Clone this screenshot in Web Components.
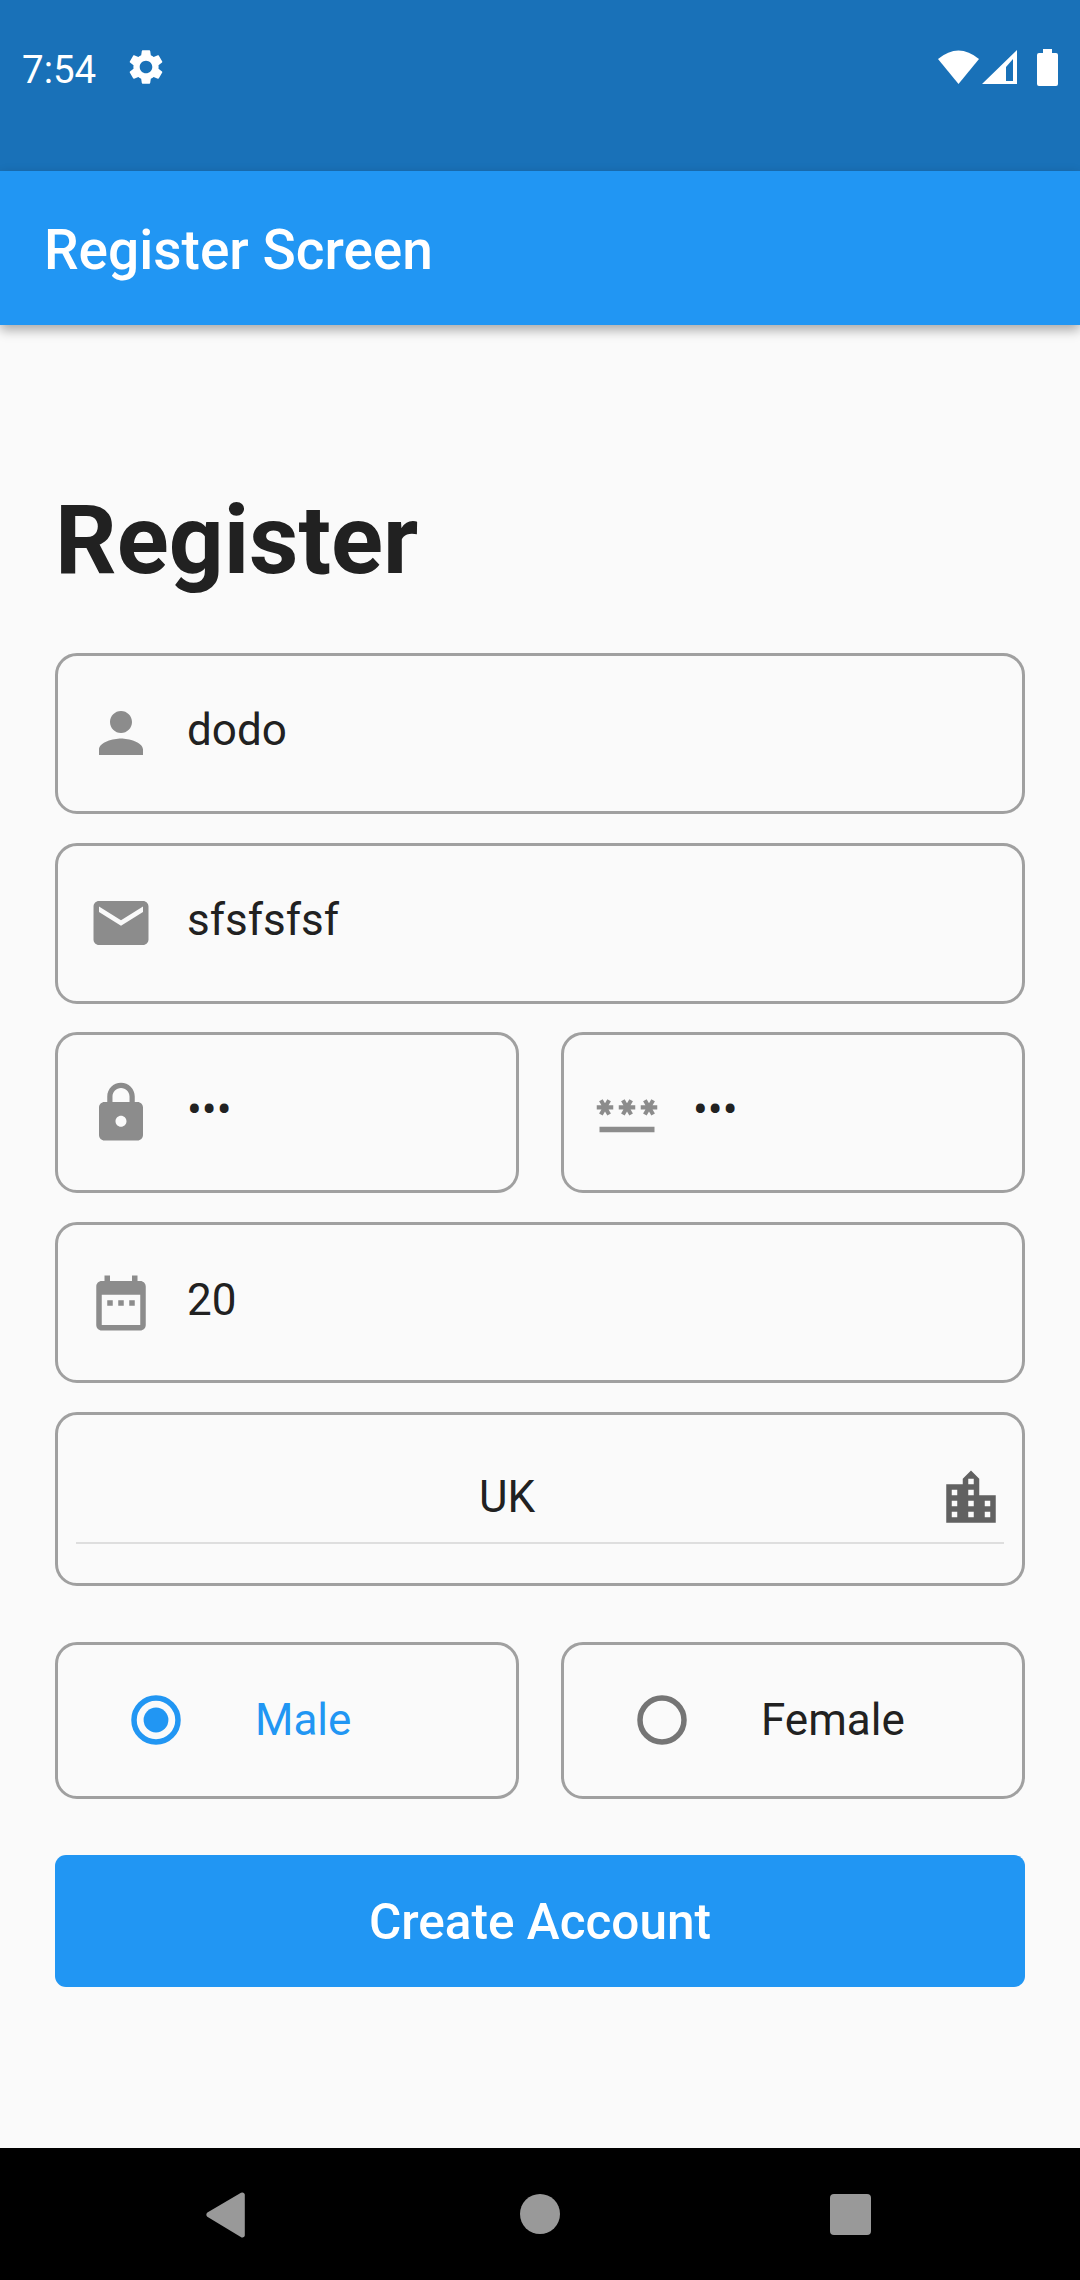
<!DOCTYPE html>
<html><head><meta charset="utf-8"><title>Register Screen</title>
<style>
html,body{margin:0;padding:0;background:#fafafa;font-family:Roboto,"Liberation Sans",sans-serif}
</style></head><body>
<register-app>
  <status-bar slot="top"></status-bar>
  <app-bar slot="top">Register Screen</app-bar>
  <page-title>Register</page-title>
  <form-field value="dodo"><svg slot="icon" width="66" height="66" viewBox="0 0 24 24" fill="#8c8c8c"><path d="M12 12c2.21 0 4-1.79 4-4s-1.79-4-4-4-4 1.79-4 4 1.79 4 4 4zm0 2c-2.67 0-8 1.34-8 4v2h16v-2c0-2.66-5.33-4-8-4z"/></svg></form-field>
  <form-field value="sfsfsfsf"><svg slot="icon" width="66" height="66" viewBox="0 0 24 24" fill="#8c8c8c"><path d="M20 4H4c-1.1 0-1.99.9-1.99 2L2 18c0 1.1.9 2 2 2h16c1.1 0 2-.9 2-2V6c0-1.1-.9-2-2-2zm0 4l-8 5-8-5V6l8 5 8-5v2z"/></svg></form-field>
  <field-pair>
    <form-field value="•••"><svg slot="icon" width="66" height="66" viewBox="0 0 24 24" fill="#8c8c8c"><path d="M18 8h-1V6c0-2.76-2.24-5-5-5S7 3.24 7 6v2H6c-1.1 0-2 .9-2 2v10c0 1.1.9 2 2 2h12c1.1 0 2-.9 2-2V10c0-1.1-.9-2-2-2zm-6 9c-1.1 0-2-.9-2-2s.9-2 2-2 2 .9 2 2-.9 2-2 2zm3.1-9H8.9V6c0-1.71 1.39-3.1 3.1-3.1 1.71 0 3.1 1.39 3.1 3.1v2z"/></svg></form-field>
    <form-field value="•••"><svg slot="icon" width="66" height="66" viewBox="0 0 24 24" fill="#8c8c8c"><path d="M2 17h20v2H2v-2zm1.15-4.05L4 11.47l.85 1.48 1.3-.75-.85-1.48H7v-1.5H5.3l.85-1.47L4.85 7 4 8.47 3.15 7l-1.3.75.85 1.47H1v1.5h1.7l-.85 1.48 1.3.75zm6.7-.75l1.3.75.85-1.48.85 1.48 1.3-.75-.85-1.48H15v-1.5h-1.7l.85-1.47-1.3-.75L12 8.47 11.15 7l-1.3.75.85 1.47H9v1.5h1.7l-.85 1.48zM23 9.22h-1.7l.85-1.47-1.3-.75L20 8.47 19.15 7l-1.3.75.85 1.47H17v1.5h1.7l-.85 1.48 1.3.75.85-1.48.85 1.48 1.3-.75-.85-1.48H23v-1.5z"/></svg></form-field>
  </field-pair>
  <form-field value="20"><svg slot="icon" width="66" height="66" viewBox="0 0 24 24" fill="#8c8c8c"><path d="M9 11H7v2h2v-2zm4 0h-2v2h2v-2zm4 0h-2v2h2v-2zm2-7h-1V2h-2v2H8V2H6v2H5c-1.11 0-1.99.9-1.99 2L3 20c0 1.1.89 2 2 2h14c1.1 0 2-.9 2-2V6c0-1.1-.9-2-2-2zm0 16H5V9h14v11z"/></svg></form-field>
  <city-select value="UK"></city-select>
  <field-pair style="margin-top:27.25px">
    <radio-option label="Male" checked></radio-option>
    <radio-option label="Female"></radio-option>
  </field-pair>
  <primary-button>Create Account</primary-button>
  <nav-bar slot="bottom"></nav-bar>
</register-app>
<template id="t-app"><style>
:host{display:flex;flex-direction:column;height:2280px;background:#fafafa}
main{flex:1;display:flex;flex-direction:column;gap:28.75px;padding:0 55px;min-height:0}
</style><slot name="top"></slot><main><slot></slot></main><slot name="bottom"></slot></template>
<template id="t-status"><style>
:host{display:flex;align-items:flex-start;height:171px;box-sizing:border-box;background:#1971b8;color:#fff;padding:47px 22px 0 22px;font:400 38.5px/45px Roboto,sans-serif}
.time{width:96px}
svg{display:block}
.gear{margin:-1px 0 0 6.5px}
.right{margin-left:auto;display:flex;align-items:flex-start;margin-top:2px}
</style><span class="time">7:54</span>
<svg class="gear" width="42" height="42" viewBox="0 0 24 24" fill="#fff"><path d="M19.14 12.94c.04-.3.06-.61.06-.94 0-.32-.02-.64-.07-.94l2.03-1.58c.18-.14.23-.41.12-.61l-1.92-3.32c-.12-.22-.37-.29-.59-.22l-2.39.96c-.5-.38-1.03-.7-1.62-.94l-.36-2.54c-.04-.24-.24-.41-.48-.41h-3.84c-.24 0-.43.17-.47.41l-.36 2.54c-.59.24-1.13.57-1.62.94l-2.39-.96c-.22-.08-.47 0-.59.22L2.74 8.87c-.12.21-.08.47.12.61l2.03 1.58c-.05.3-.09.63-.09.94s.02.64.07.94l-2.03 1.58c-.18.14-.23.41-.12.61l1.92 3.32c.12.22.37.29.59.22l2.39-.96c.5.38 1.03.7 1.62.94l.36 2.54c.05.24.24.41.48.41h3.84c.24 0 .44-.17.47-.41l.36-2.54c.59-.24 1.13-.56 1.62-.94l2.39.96c.22.08.47 0 .59-.22l1.92-3.32c.12-.22.07-.47-.12-.61l-2.01-1.58zM12 15.6c-1.98 0-3.6-1.62-3.6-3.6s1.62-3.6 3.6-3.6 3.6 1.62 3.6 3.6-1.62 3.6-3.6 3.6z"/></svg>
<div class="right">
<svg width="42" height="36" viewBox="0 0 42 36" fill="#fff" style="margin-right:2px"><path d="M0 10 Q20.5 -7 41 10 L20.500 35 Z"/></svg>
<svg width="36" height="36" viewBox="0 0 36 36" fill="#fff" style="margin-right:19px"><path fill-rule="evenodd" d="M35 1V35H0Z M31 10 L24 18 V32 H31 Z"/></svg>
<svg width="21" height="37" viewBox="0 0 21 37"><path fill="#fff" d="M6 0h9v4h4a2 2 0 0 1 2 2v29a2 2 0 0 1-2 2H2a2 2 0 0 1-2-2V6a2 2 0 0 1 2-2h4z"/></svg>
</div></template>
<template id="t-appbar"><style>
:host{display:flex;align-items:center;position:relative;height:154px;box-sizing:border-box;background:#2196f3;color:#fff;padding:3px 44px 0;font:500 55px/64px Roboto,sans-serif;box-shadow:0 5px 11px rgba(0,0,0,.33)}
</style><slot></slot></template>
<template id="t-title"><style>
:host{display:block;color:#212121;font:700 96.25px/112px Roboto,sans-serif;padding-top:159px;margin-bottom:28px}
</style><slot></slot></template>
<template id="t-field"><style>
:host{display:flex;min-width:0;align-items:center;box-sizing:border-box;height:161px;border:3px solid #a0a0a0;border-radius:22px;padding:0 30px;background:#fafafa;color:#212121;font:400 44px/52px Roboto,sans-serif}
.icon{display:flex;width:66px;height:66px;flex:none}
.val{margin-left:33px;padding-bottom:6px;white-space:pre}
</style><span class="icon"><slot name="icon"></slot></span><span class="val"></span></template>
<template id="t-pair"><style>
:host{display:flex;gap:42px}
::slotted(*){flex:1 1 0}
</style><slot></slot></template>
<template id="t-city"><style>
:host{display:block;box-sizing:border-box;height:174px;border:3px solid #a0a0a0;border-radius:22px;padding:44px 18px 0 18px;color:#212121;font:400 44px/52px Roboto,sans-serif}
.row{display:flex;align-items:center;height:83px;border-bottom:2px solid #dedede}
.val{flex:1;text-align:center;padding-bottom:6px}
svg{display:block;flex:none;margin-bottom:4px}
</style><div class="row"><span class="val"></span><svg width="66" height="66" viewBox="0 0 24 24" fill="#616161"><path d="M15 11V5l-3-3-3 3v2H3v14h18V11h-6zm-8 8H5v-2h2v2zm0-4H5v-2h2v2zm0-4H5V9h2v2zm6 8h-2v-2h2v2zm0-4h-2v-2h2v2zm0-4h-2V9h2v2zm0-4h-2V5h2v2zm6 12h-2v-2h2v2zm0-4h-2v-2h2v2z"/></svg></div></template>
<template id="t-radio"><style>
:host{display:flex;min-width:0;align-items:center;box-sizing:border-box;height:157px;border:3px solid #a0a0a0;border-radius:22px;padding-left:73px;color:#212121;font:400 44px/52px Roboto,sans-serif}
:host([checked]){color:#2196f3}
svg{display:block;flex:none}
span{margin-left:74px}
</style><svg width="50" height="50" viewBox="0 0 50 50"><circle cx="25" cy="25" r="22" fill="none" stroke-width="5.5"/><circle class="dot" cx="25" cy="25" r="12.4"/></svg><span></span></template>
<template id="t-button"><style>
:host{display:flex;align-items:center;justify-content:center;height:132px;box-sizing:border-box;padding-top:2px;margin-top:27.25px;border-radius:11px;background:#2196f3;color:#fff;font:500 49.5px/58px Roboto,sans-serif}
</style><slot></slot></template>
<template id="t-nav"><style>
:host{display:flex;align-items:flex-start;box-sizing:border-box;height:132px;background:#000;padding:44px 0 0 206px}
svg{display:block;flex:none}
</style>
<svg width="39" height="46" viewBox="0 0 39 46" fill="#999"><path d="M35 .8 1.4 20.6a3 3 0 0 0-.1 4.2L34.800 45a2.500 2.500 0 0 0 4-1.500V2.500A2.500 2.500 0 0 0 35 .8z" /></svg>
<svg width="40" height="40" viewBox="0 0 40 40" fill="#999" style="margin:2px 0 0 275px"><circle cx="20" cy="20" r="20"/></svg>
<svg width="41" height="41" viewBox="0 0 41 41" fill="#999" style="margin:2px 0 0 270px"><rect width="41" height="41" rx="4"/></svg></template>
<script>
function def(name,tid,init){customElements.define(name,class extends HTMLElement{constructor(){super();const r=this.attachShadow({mode:'open'});r.appendChild(document.getElementById(tid).content.cloneNode(true));if(init)init(this,r);}});}
def('register-app','t-app');
def('status-bar','t-status');
def('app-bar','t-appbar');
def('page-title','t-title');
def('form-field','t-field',(h,r)=>{r.querySelector('.val').textContent=h.getAttribute('value')});
def('field-pair','t-pair');
def('city-select','t-city',(h,r)=>{r.querySelector('.val').textContent=h.getAttribute('value')});
def('radio-option','t-radio',(h,r)=>{const c=h.hasAttribute('checked');r.querySelector('span').textContent=h.getAttribute('label');const s=r.querySelectorAll('circle');s[0].setAttribute('stroke',c?'#2196f3':'#757575');s[1].setAttribute('fill',c?'#2196f3':'none');});
def('primary-button','t-button');
def('nav-bar','t-nav');
</script>
</body></html>
